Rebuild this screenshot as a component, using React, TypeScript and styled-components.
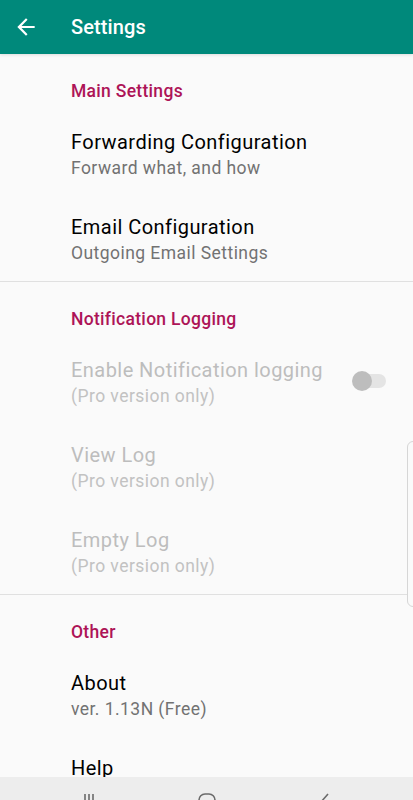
import React from "react";
import styled, { createGlobalStyle } from "styled-components";

const GlobalStyle = createGlobalStyle`
  html, body {
    margin: 0;
    padding: 0;
    background: #fafafa;
    overflow: hidden;
  }
  body {
    font-family: Roboto, "Noto Sans", sans-serif;
    -webkit-font-smoothing: antialiased;
  }
`;

const Screen = styled.div`
  position: relative;
  width: 413px;
  height: 800px;
  display: flex;
  flex-direction: column;
  background: #fafafa;
  overflow: hidden;
`;

const Toolbar = styled.header`
  flex: 0 0 54px;
  display: flex;
  align-items: center;
  background: #00897b;
  color: #fff;
  box-shadow: 0 1px 3px rgba(0, 0, 0, 0.12);
  z-index: 1;
`;

const BackButton = styled.button`
  width: 71px;
  height: 54px;
  padding: 0 0 0 13px;
  display: flex;
  align-items: center;
  background: none;
  border: none;
  color: #fff;
`;

const Title = styled.h1`
  margin: 0;
  font-size: 20px;
  font-weight: 500;
  letter-spacing: 0.1px;
`;

const Content = styled.main`
  flex: 1;
  overflow: hidden;
`;

const Category = styled.div`
  padding: 27px 16px 10px 71px;
  font-size: 17.5px;
  line-height: 20px;
  font-weight: 500;
  letter-spacing: 0.3px;
  color: #ad1457;
`;

const Item = styled.div<{ $disabled?: boolean }>`
  height: 85px;
  box-sizing: border-box;
  padding: 18px 24px 15px 71px;
  display: flex;
  align-items: flex-start;
  color: ${(p) => (p.$disabled ? "#bdbdbd" : "#000")};
`;

const ItemText = styled.div`
  flex: 1;
`;

const ItemTitle = styled.div`
  font-size: 20px;
  line-height: 26px;
  letter-spacing: 0.45px;
`;

const ItemSummary = styled.div<{ $disabled?: boolean }>`
  font-size: 17.5px;
  line-height: 26px;
  letter-spacing: 0.45px;
  color: ${(p) => (p.$disabled ? "#c2c2c2" : "#727272")};
`;

const Divider = styled.hr`
  margin: 0;
  border: none;
  height: 1px;
  background: #e0e0e0;
`;

const Switch = styled.div`
  position: relative;
  align-self: center;
  width: 34px;
  height: 20px;
  margin: -4px 3px 0 0;
  display: flex;
  align-items: center;

  &::before {
    content: "";
    width: 30px;
    height: 14px;
    margin-left: 4px;
    border-radius: 7px;
    background: #e4e4e4;
  }

  &::after {
    content: "";
    position: absolute;
    left: 0;
    top: 0;
    width: 20px;
    height: 20px;
    border-radius: 50%;
    background: #bdbdbd;
  }
`;

const EdgeHandle = styled.div`
  position: absolute;
  right: -6px;
  top: 441px;
  width: 10px;
  height: 164px;
  border: 1px solid #d6d6d6;
  border-radius: 6px;
  background: #fafafa;
`;

const NavBar = styled.nav`
  flex: 0 0 23px;
  background: #ededed;
  display: flex;
  justify-content: center;
  gap: 94px;
  padding-top: 14px;
  box-sizing: border-box;
  overflow: hidden;
  color: #6b6b6b;
`;

const NavIcon = styled.svg`
  width: 24px;
  height: 24px;
  flex: none;
`;

const BackArrow = () => (
  <svg width="26" height="26" viewBox="0 0 24 24" fill="currentColor">
    <path d="M20 11H7.83l5.59-5.59L12 4l-8 8 8 8 1.41-1.41L7.83 13H20v-2z" />
  </svg>
);

type Pref = { title: string; summary: string; disabled?: boolean; toggle?: boolean };

const sections: { title: string; items: Pref[] }[] = [
  {
    title: "Main Settings",
    items: [
      { title: "Forwarding Configuration", summary: "Forward what, and how" },
      { title: "Email Configuration", summary: "Outgoing Email Settings" },
    ],
  },
  {
    title: "Notification Logging",
    items: [
      { title: "Enable Notification logging", summary: "(Pro version only)", disabled: true, toggle: true },
      { title: "View Log", summary: "(Pro version only)", disabled: true },
      { title: "Empty Log", summary: "(Pro version only)", disabled: true },
    ],
  },
  {
    title: "Other",
    items: [
      { title: "About", summary: "ver. 1.13N (Free)" },
      { title: "Help", summary: "" },
    ],
  },
];

export default function App() {
  return (
    <Screen>
      <GlobalStyle />
      <Toolbar>
        <BackButton aria-label="Back">
          <BackArrow />
        </BackButton>
        <Title>Settings</Title>
      </Toolbar>

      <Content>
        {sections.map((section, i) => (
          <React.Fragment key={section.title}>
            {i > 0 && <Divider />}
            <Category>{section.title}</Category>
            {section.items.map((item) => (
              <Item key={item.title} $disabled={item.disabled}>
                <ItemText>
                  <ItemTitle>{item.title}</ItemTitle>
                  {item.summary && <ItemSummary $disabled={item.disabled}>{item.summary}</ItemSummary>}
                </ItemText>
                {item.toggle && <Switch />}
              </Item>
            ))}
          </React.Fragment>
        ))}
      </Content>

      <NavBar>
        <NavIcon viewBox="0 0 24 24" fill="none" stroke="currentColor" strokeWidth="1.6">
          <path d="M8 3v16M12 3v16M16 3v16" />
        </NavIcon>
        <NavIcon viewBox="0 0 24 24" fill="none" stroke="currentColor" strokeWidth="1.6">
          <rect x="4" y="3" width="16" height="16" rx="6" />
        </NavIcon>
        <NavIcon viewBox="0 0 24 24" fill="none" stroke="currentColor" strokeWidth="1.6">
          <path d="M15 3l-7 8 7 8" />
        </NavIcon>
      </NavBar>

      <EdgeHandle />
    </Screen>
  );
}
